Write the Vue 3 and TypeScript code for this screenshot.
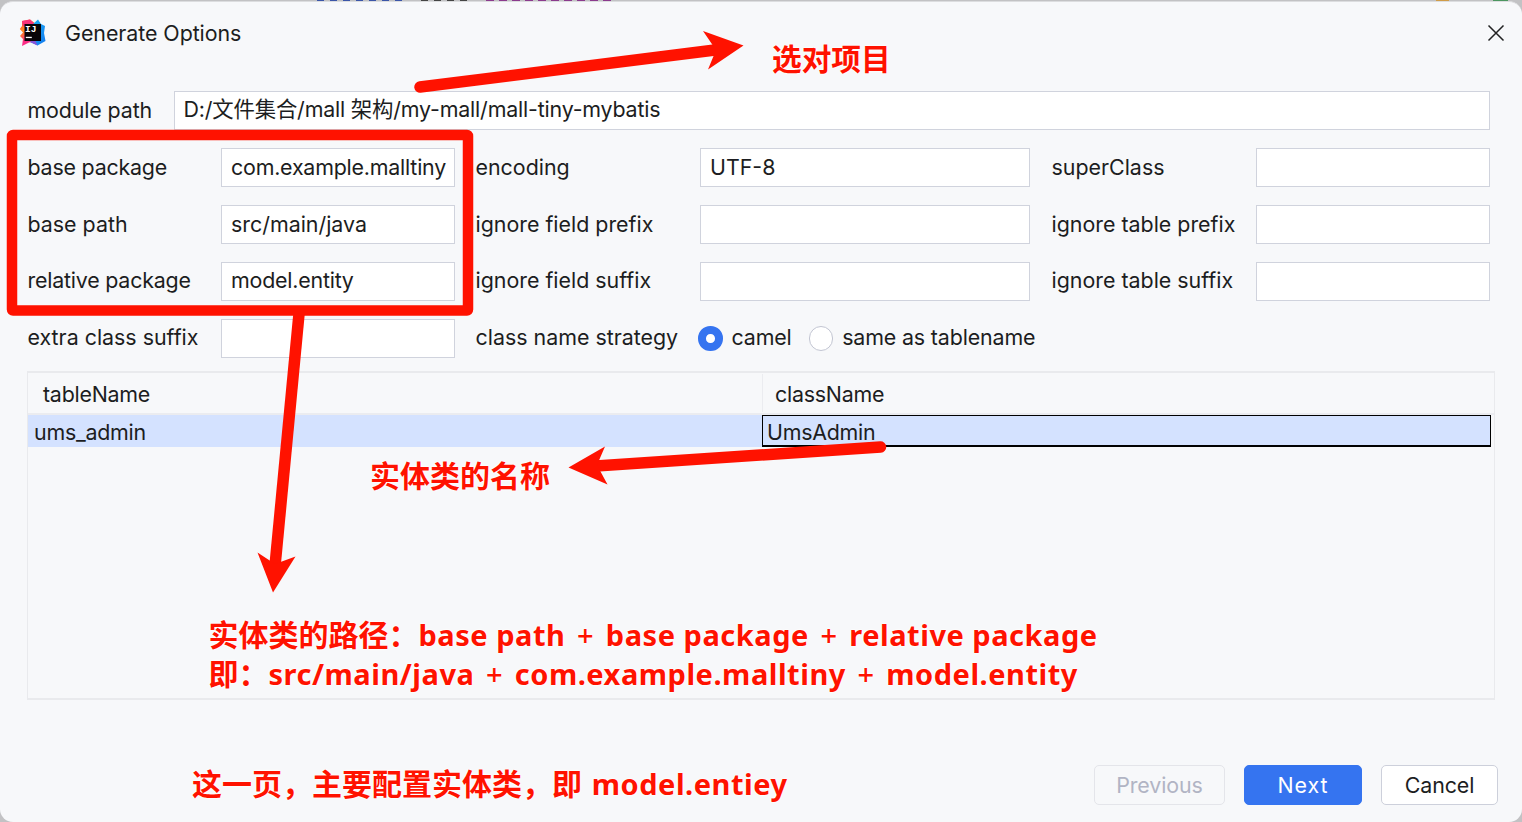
<script setup lang="ts">
import { ref } from 'vue'

interface Field {
  label: string
  value: string
  tight?: boolean
}

const modulePath = ref('D:/文件集合/mall 架构/my-mall/mall-tiny-mybatis')

const rows = ref<Field[][]>([
  [
    { label: 'base package', value: 'com.example.malltiny', tight: true },
    { label: 'encoding', value: 'UTF-8' },
    { label: 'superClass', value: '' },
  ],
  [
    { label: 'base path', value: 'src/main/java' },
    { label: 'ignore field prefix', value: '' },
    { label: 'ignore table prefix', value: '' },
  ],
  [
    { label: 'relative package', value: 'model.entity', tight: true },
    { label: 'ignore field suffix', value: '' },
    { label: 'ignore table suffix', value: '' },
  ],
])

const strategies = ['camel', 'same as tablename']
const strategy = ref('camel')
const tables = [{ tableName: 'ums_admin', className: 'UmsAdmin' }]
</script>

<template>
  <div class="desktop">
    <div class="behind">
      <i class="c1"></i><i class="c2"></i><i class="c3"></i><i class="c4"></i><i class="c5"></i>
    </div>
    <main class="dialog">
      <header class="titlebar">
        <svg class="logo" width="28" height="28" viewBox="0 0 28 28">
          <defs>
            <linearGradient id="warm" x1="0" y1="0" x2="0.4" y2="1">
              <stop offset="0" stop-color="#ff4a4a" />
              <stop offset="0.45" stop-color="#ff8a1e" />
              <stop offset="0.8" stop-color="#fb2d86" />
            </linearGradient>
            <linearGradient id="cool" x1="0" y1="0" x2="1" y2="1">
              <stop offset="0" stop-color="#18b4f5" />
              <stop offset="1" stop-color="#1479ee" />
            </linearGradient>
          </defs>
          <path d="M3 2 L11 0.5 L17 5 L17 22 L10 23.5 L3 27 L4 20 L1 17 L4 13.5 L0.8 10 L3 7 Z" fill="url(#warm)" />
          <path d="M3 2 L11 0.5 L16 5 L12 8 L4 7 Z" fill="#f7327b" />
          <path d="M14 5 L19 0.5 L22 5 L26 7 L25 14 L26.5 22 L18.5 26.5 L11 23 L18 20 Z" fill="url(#cool)" />
          <path d="M11 23 L16 21 L18.5 26.5 Z" fill="#8a52d8" />
          <rect x="5.500" y="5" width="16.500" height="17" fill="#080408" />
          <text x="6" y="13.300" font-size="9.500">IJ</text>
          <rect x="6.800" y="17.800" width="6" height="1.300" fill="#fff" />
        </svg>
        <h1>Generate Options</h1>
        <svg class="close" width="18" height="18" viewBox="0 0 18 18">
          <path d="M1.500 1.500 L16.500 16.500 M16.500 1.500 L1.500 16.500" stroke="#222" stroke-width="1.500" />
        </svg>
      </header>

      <section class="form">
        <div class="row module">
          <label>module path</label>
          <div class="field">{{ modulePath }}</div>
        </div>
        <div v-for="(row, i) in rows" :key="i" class="row">
          <template v-for="f in row" :key="f.label">
            <label :class="{ tight: f.tight }">{{ f.label }}</label>
            <div class="field" :class="{ tight: f.tight }">{{ f.value }}</div>
          </template>
        </div>
        <div class="row">
          <label>extra class suffix</label>
          <div class="field"></div>
          <label>class name strategy</label>
          <div class="radios">
            <span v-for="s in strategies" :key="s" class="option" @click="strategy = s">
              <span class="radio" :class="{ on: s === strategy }"></span><span class="caption">{{ s }}</span>
            </span>
          </div>
        </div>
      </section>

      <section class="table">
        <div class="thead"><span>tableName</span><span>className</span></div>
        <div v-for="t in tables" :key="t.tableName" class="trow">
          <span>{{ t.tableName }}</span><span class="focused">{{ t.className }}</span>
        </div>
      </section>

      <footer class="actions">
        <button class="disabled">Previous</button>
        <button class="primary">Next</button>
        <button>Cancel</button>
      </footer>
    </main>

    <svg class="marks" width="1522" height="822" viewBox="0 0 1522 822">
      <rect x="12" y="135" width="456" height="175.500" rx="1" fill="none" stroke="#ff1200" stroke-width="10.500" stroke-linejoin="round" />
      <g stroke="#ff1200" stroke-width="11.500" stroke-linecap="round">
        <path d="M420 87 L715 50" />
        <path d="M299 314 L275 566" stroke-linecap="butt" />
        <path d="M880.500 447 L596 466" />
      </g>
      <g fill="#ff1200">
        <path d="M743.500 45.500 L703 31 L716 50 L708 69.500 Z" />
        <path d="M273 592.500 L257.500 552.500 L275 564 L295.500 556.500 Z" />
        <path d="M568.500 467.500 L605 446.500 L597 465 L607.500 484.500 Z" />
      </g>
    </svg>
    <p class="note project">选对项目</p>
    <p class="note entity">实体类的名称</p>
    <p class="note path">实体类的路径：<b>base path <i>+</i> base package <i>+</i> relative package</b><br />即：<b>src/main/java <i>+</i> com.example.malltiny <i>+</i> model.entity</b></p>
    <p class="note page">这一页，主要配置实体类，即 <b>model.entiey</b></p>
  </div>
</template>

<style>
body {
  margin: 0;
}
</style>

<style scoped>
.desktop {
  position: relative;
  box-sizing: border-box;
  width: 1522px;
  height: 822px;
  padding-top: 1px;
  overflow: hidden;
  background: #c2c2c4;
  font-family: Inter, "Noto Sans CJK SC", sans-serif;
  font-size: 21.4px;
  letter-spacing: 0;
  color: #1c1d21;
}
.behind {
  position: absolute;
  inset: 0 0 auto 0;
  height: 1px;
}
.behind i {
  position: absolute;
  top: 0;
  height: 1px;
}
.c1 { left: 317px; width: 88px; background: repeating-linear-gradient(90deg, #3b55a8 0 7px, #c2c2c4 7px 13px); }
.c2 { left: 421px; width: 50px; background: repeating-linear-gradient(90deg, #444 0 7px, #c2c2c4 7px 13px); }
.c3 { left: 486px; width: 128px; background: repeating-linear-gradient(90deg, #8b3a8d 0 8px, #c2c2c4 8px 13px); }
.c4 { left: 1436px; width: 13px; background: #d09c48; }
.c5 { left: 1493px; width: 15px; background: #4c9660; }
.dialog {
  box-sizing: border-box;
  height: 821px;
  border-top: 1px solid #dcdddf;
  border-radius: 13px;
  background: #f7f8fa;
  display: flex;
  flex-direction: column;
}
.titlebar {
  height: 62px;
  padding: 0 17px 0 19px;
  display: flex;
  align-items: center;
}
.logo text {
  font-family: "Liberation Mono", monospace;
  font-weight: 700;
  fill: #fff;
}
h1 {
  flex: 1;
  margin: 0 0 0 18px;
  font-size: inherit;
  font-weight: 400;
  letter-spacing: -0.06px;
}
.form {
  padding: 27px 32px 0 28px;
  display: flex;
  flex-direction: column;
  gap: 18px;
}
.row {
  height: 39px;
  display: grid;
  grid-template-columns: 193px 234px 245px 330px 226px 234px;
  align-items: center;
}
.row.module {
  grid-template-columns: 146px 1fr;
  letter-spacing: -0.13px;
}
.row > label:nth-of-type(2) {
  padding-left: 21px;
}
.row > label:nth-of-type(3) {
  padding-left: 22px;
}
label {
  margin-left: -0.5px;
  line-height: 36px;
  padding-bottom: 3px;
  white-space: nowrap;
}
.row:nth-child(-n + 3) > label {
  padding-bottom: 1px;
}
.tight {
  letter-spacing: -0.21px;
}
.field {
  box-sizing: border-box;
  height: 39px;
  padding-left: 9px;
  border: 1.5px solid #d0d3dd;
  background: #fff;
  line-height: 36px;
  white-space: nowrap;
  overflow: hidden;
}
.row.module .field {
  letter-spacing: -0.18px;
  padding-left: 8.5px;
}
.row:nth-child(1) > .field,
.row:nth-child(4) > .field {
  line-height: 34px;
}
.radios {
  display: flex;
  gap: 17px;
  margin-left: -2px;
  letter-spacing: -0.14px;
  line-height: 25px;
  white-space: nowrap;
}
.option {
  display: flex;
  align-items: center;
  gap: 9px;
}
.caption {
  padding-bottom: 2px;
}
.radio {
  box-sizing: border-box;
  width: 24.5px;
  height: 24.5px;
  border: 1.5px solid #c2c5d2;
  border-radius: 50%;
  background: #fff;
}
.radio.on {
  border: 8.5px solid #3574f0;
}
.table {
  box-sizing: border-box;
  height: 329px;
  margin: 13px 27px 0 27px;
  border: 1.5px solid #e9eaed;
  border-width: 2px 1px;
  letter-spacing: -0.24px;
}
.thead,
.trow {
  display: grid;
  grid-template-columns: 734px 1fr;
  align-items: center;
}
.thead {
  height: 42px;
  box-sizing: border-box;
  border-bottom: 2px solid #ebecf0;
}
.thead span {
  padding-left: 15px;
  padding-top: 2px;
  line-height: 36px;
}
.thead span + span {
  border-left: 1px solid #ebecf0;
  padding-left: 12px;
}
.trow {
  height: 32px;
  margin-right: 3px;
  background: #d4e2ff;
}
.trow span {
  box-sizing: border-box;
  height: 32px;
  padding-left: 6px;
  line-height: 34px;
}
.trow .focused {
  padding-left: 4px;
  border: 1.5px solid #000;
  border-bottom-width: 2px;
  line-height: 32px;
}
.actions {
  margin: 65px 24px 0 0;
  display: flex;
  justify-content: flex-end;
  gap: 19px;
}
button {
  box-sizing: border-box;
  width: 117px;
  height: 40px;
  padding: 0;
  border: 1.5px solid #cdd0db;
  border-radius: 5px;
  background: #fff;
  color: inherit;
  font: inherit;
  letter-spacing: -0.1px;
}
.disabled {
  width: 131px;
  background: transparent;
  border-color: #e4e5ea;
  color: #b1b4c4;
}
.primary {
  width: 118px;
  background: #3574f0;
  border-color: #3574f0;
  color: #fff;
  letter-spacing: 0.9px;
}
.marks {
  position: absolute;
  inset: 0;
}
.note {
  position: absolute;
  margin: 0;
  font: 700 30px/39px "Noto Sans CJK SC", sans-serif;
  letter-spacing: 0;
  color: #ff1200;
  white-space: nowrap;
  text-shadow: 0 0 2px #fff, 0 0 2px #fff, 0 0 3px #fff;
}
.note b {
  font-family: "Noto Sans", "Open Sans", sans-serif;
  font-size: 29px;
  font-weight: 700;
  letter-spacing: 0.52px;
  line-height: 0;
}
.note i {
  margin: 0 3.6px;
  font-family: "Open Sans", sans-serif;
  font-style: normal;
  font-weight: 600;
}
.project { left: 772px; top: 38px; font-size: 29.7px; }
.entity { left: 370px; top: 455px; }
.path { left: 208.5px; top: 614px; }
.page { left: 192px; top: 763px; }
.page b { margin-left: 3px; }
</style>
